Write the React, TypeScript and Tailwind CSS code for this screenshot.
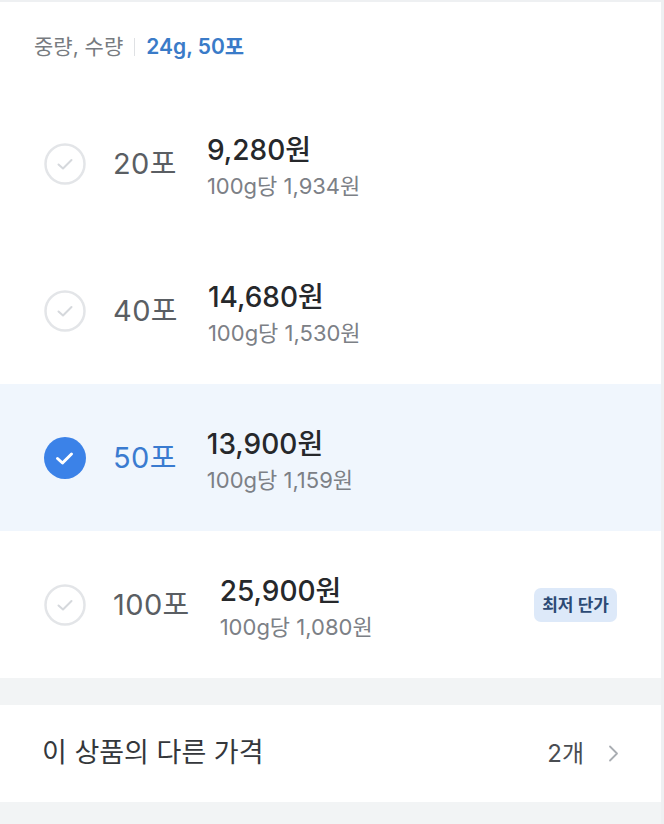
interface PriceOption {
  label: string
  price: string
  unitPrice: string
  selected?: boolean
  badge?: string
}

const OPTIONS: PriceOption[] = [
  { label: '20포', price: '9,280원', unitPrice: '100g당 1,934원' },
  { label: '40포', price: '14,680원', unitPrice: '100g당 1,530원' },
  { label: '50포', price: '13,900원', unitPrice: '100g당 1,159원', selected: true },
  { label: '100포', price: '25,900원', unitPrice: '100g당 1,080원', badge: '최저 단가' },
]

const CheckCircle = ({ selected }: { selected?: boolean }) =>
  selected ? (
    <svg width="42" height="42" viewBox="0 0 42 42" className="shrink-0">
      <circle cx="21" cy="21" r="21" fill="#3b82e8" />
      <path d="M13.5 21.5l5 4.5 9-9" fill="none" stroke="#fff" strokeWidth="3" strokeLinecap="round" strokeLinejoin="round" />
    </svg>
  ) : (
    <svg width="42" height="42" viewBox="0 0 42 42" className="shrink-0">
      <circle cx="21" cy="21" r="19.5" fill="#fff" stroke="#e3e5e8" strokeWidth="2.5" />
      <path d="M14.5 21.5l4.5 4 8.5-8.5" fill="none" stroke="#d5d8dc" strokeWidth="2" strokeLinecap="round" strokeLinejoin="round" />
    </svg>
  )

export default function App() {
  return (
    <div
      className="min-h-[824px] w-[664px] border-r-[3px] border-t-2 border-[#eef0f2] bg-[#f2f4f5]"
      style={{ fontFamily: 'Inter, "Noto Sans CJK KR", sans-serif' }}
    >
      <div className="bg-white">
        <div className="flex h-[88px] items-center px-[34px] pt-[2px] text-[21px]">
          <span className="text-[#777b80]">중량, 수량</span>
          <span className="mx-[11px] h-[18px] w-px bg-[#dfe1e4]" />
          <span className="font-semibold text-[#3a7bc8]">24g, 50포</span>
        </div>

        {OPTIONS.map((option) => (
          <div
            key={option.label}
            className={[
              'flex h-[147px] items-center pl-[44px] pr-[44px]',
              option.selected ? 'bg-[#f0f6fd]' : 'bg-white',
            ].join(' ')}
          >
            <CheckCircle selected={option.selected} />
            <span
              className={[
                'ml-[27px] text-[29px] tracking-[0.4px]',
                option.selected ? 'text-[#3a7bd0]' : 'text-[#5a5e63]',
              ].join(' ')}
            >
              {option.label}
            </span>
            <div className="ml-[30px] flex flex-col pt-[4px]">
              <span className="text-[28px] font-medium leading-[38px] text-[#26282b]">
                {option.price}
              </span>
              <span className="mt-[2px] text-[22px] leading-[30px] text-[#7c8086]">
                {option.unitPrice}
              </span>
            </div>
            {option.badge ? (
              <span className="ml-auto rounded-[7px] bg-[#dde9f9] px-[8px] py-[5px] text-[17px] font-semibold leading-[24px] text-[#2c4a75]">
                {option.badge}
              </span>
            ) : null}
          </div>
        ))}
      </div>

      <div className="mt-[27px] flex h-[97px] items-center bg-white pl-[42px] pr-[42px]">
        <span className="text-[27px] text-[#34373b]">이 상품의 다른 가격</span>
        <span className="ml-auto text-[24px] text-[#4a4d52]">2개</span>
        <svg width="11" height="17" viewBox="0 0 11 17" className="ml-[24px]">
          <path d="M2 1.5l7 7-7 7" fill="none" stroke="#a9adb2" strokeWidth="1.8" strokeLinecap="round" strokeLinejoin="round" />
        </svg>
      </div>
    </div>
  )
}
